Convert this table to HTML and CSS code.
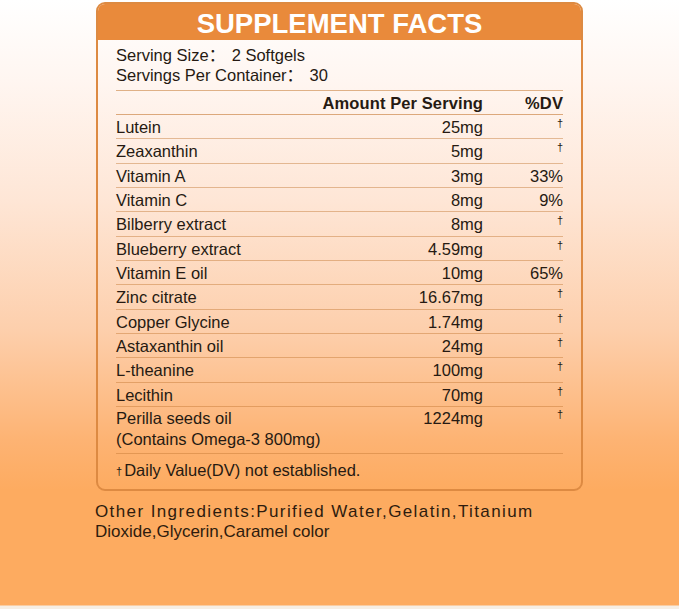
FILE: index.html
```html
<!DOCTYPE html>
<html lang="en">
<head>
<meta charset="utf-8">
<title>Supplement Facts</title>
<link rel="stylesheet" href="styles.css">
</head>
<body>
<main class="page">
  <section class="facts">
    <h1 class="title">SUPPLEMENT FACTS</h1>
    <div class="content">
      <div class="serving">
        <div>Serving Size<span class="colon">：</span>2 Softgels</div>
        <div>Servings Per Container<span class="colon">：</span>30</div>
      </div>
      <div class="row head">
        <span></span><span class="amt">Amount Per Serving</span><span class="dv">%DV</span>
      </div>
      <div class="row"><span>Lutein</span><span class="amt">25mg</span><span class="dv"><sup class="dag">†</sup></span></div>
      <div class="row"><span>Zeaxanthin</span><span class="amt">5mg</span><span class="dv"><sup class="dag">†</sup></span></div>
      <div class="row"><span>Vitamin A</span><span class="amt">3mg</span><span class="dv">33%</span></div>
      <div class="row"><span>Vitamin C</span><span class="amt">8mg</span><span class="dv">9%</span></div>
      <div class="row"><span>Bilberry extract</span><span class="amt">8mg</span><span class="dv"><sup class="dag">†</sup></span></div>
      <div class="row"><span>Blueberry extract</span><span class="amt">4.59mg</span><span class="dv"><sup class="dag">†</sup></span></div>
      <div class="row"><span>Vitamin E oil</span><span class="amt">10mg</span><span class="dv">65%</span></div>
      <div class="row"><span>Zinc citrate</span><span class="amt">16.67mg</span><span class="dv"><sup class="dag">†</sup></span></div>
      <div class="row"><span>Copper Glycine</span><span class="amt">1.74mg</span><span class="dv"><sup class="dag">†</sup></span></div>
      <div class="row"><span>Astaxanthin oil</span><span class="amt">24mg</span><span class="dv"><sup class="dag">†</sup></span></div>
      <div class="row"><span>L-theanine</span><span class="amt">100mg</span><span class="dv"><sup class="dag">†</sup></span></div>
      <div class="row"><span>Lecithin</span><span class="amt">70mg</span><span class="dv"><sup class="dag">†</sup></span></div>
      <div class="row tall"><span>Perilla seeds oil<br>(Contains Omega-3 800mg)</span><span class="amt">1224mg</span><span class="dv"><sup class="dag">†</sup></span></div>
      <div class="note"><span class="ndag">†</span>Daily Value(DV) not established.</div>
    </div>
  </section>
  <p class="other"><span class="spread">Other Ingredients:Purified Water,Gelatin,Titanium</span><br>Dioxide,Glycerin,Caramel color</p>
</main>
</body>
</html>
```

FILE: styles.css
```css
html, body {
  margin: 0;
  padding: 0;
}
body {
  width: 679px;
  height: 609px;
  overflow: hidden;
  font-family: "Liberation Sans", Arial, "Noto Sans CJK SC", sans-serif;
  color: #261a12;
  background: linear-gradient(to bottom,
    #ffffff 0px,
    #fff6f1 80px,
    #fee6d6 200px,
    #fdcfac 330px,
    #fdb373 440px,
    #fdab60 490px,
    #fdab60 605px,
    #f6eee4 606px,
    #f6eee4 609px);
}
.page {
  padding-top: 2px;
}
.facts {
  width: 487px;
  margin: 0 auto;
  box-sizing: border-box;
  border: 2px solid #dd8a42;
  border-radius: 9px;
  overflow: hidden;
}
.title {
  margin: 0;
  height: 36px;
  line-height: 39px;
  background: #e98a3b;
  color: #ffffff;
  font-size: 27.5px;
  font-weight: bold;
  text-align: center;
}
.content {
  padding: 0 18px;
  font-size: 16.5px;
}
.serving {
  padding: 5px 0 5px;
  line-height: 19px;
  border-bottom: 1px solid rgba(196, 120, 50, 0.55);
}
.colon {
  display: inline-block;
  width: 23px;
  font-family: "Noto Sans CJK SC", sans-serif;
}
.row {
  display: grid;
  grid-template-columns: minmax(0, 1fr) 190px 80px;
  height: 24.33px;
  line-height: 24px;
  box-sizing: border-box;
  border-bottom: 1px solid rgba(196, 120, 50, 0.45);
  white-space: nowrap;
}
.row.head {
  height: 24px;
  font-weight: bold;
  letter-spacing: 0.1px;
  border-bottom-color: rgba(196, 120, 50, 0.6);
}
.amt {
  text-align: right;
}
.dv {
  text-align: right;
}
.dag {
  font-size: 11px;
  line-height: 1;
  vertical-align: top;
  position: relative;
  top: 3px;
}
.row.tall {
  height: 47px;
  line-height: 21px;
  padding-top: 1px;
}
.row.tall .dag {
  top: 1px;
}
.note {
  padding: 6px 0 7px;
  line-height: 20px;
}
.ndag {
  font-size: 11px;
  margin-right: 2px;
  position: relative;
  top: -1px;
}
.other {
  margin: 11px 0 0 95px;
  font-size: 17px;
  line-height: 20px;
  color: #2e1c0e;
}
.spread {
  letter-spacing: 1.4px;
}
```
